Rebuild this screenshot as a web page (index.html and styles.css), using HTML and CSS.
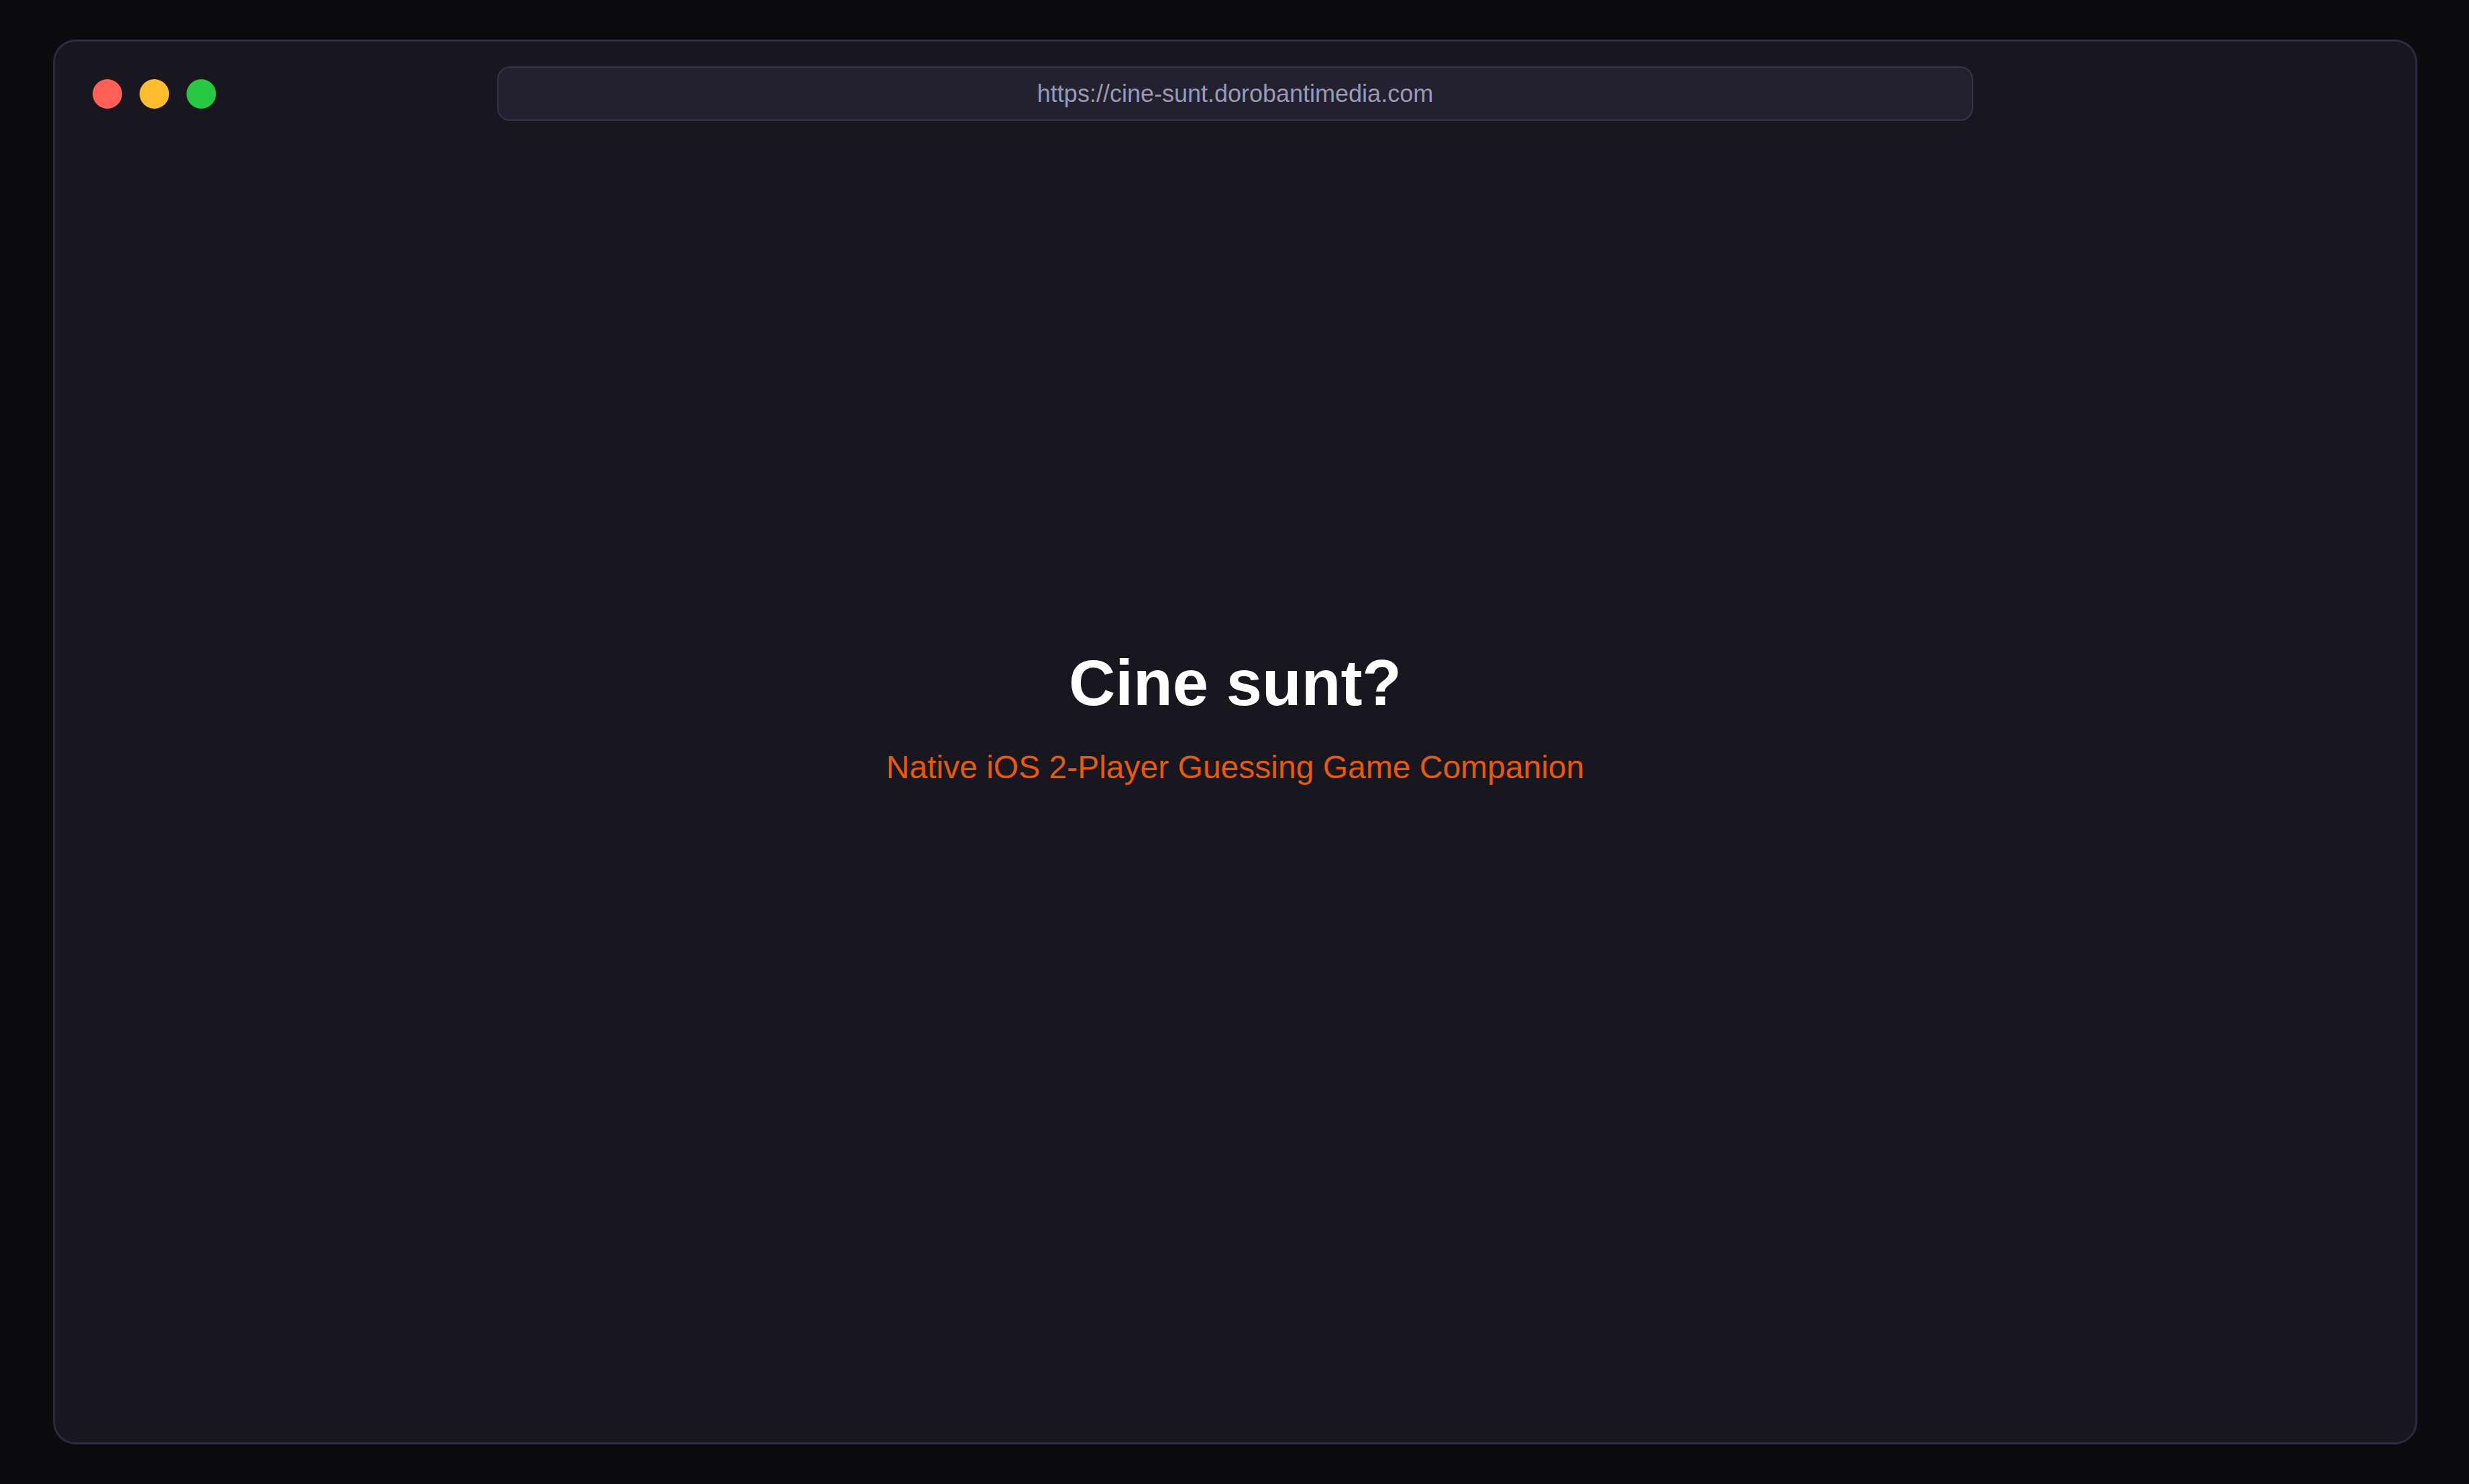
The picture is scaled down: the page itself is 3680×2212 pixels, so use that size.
FILE: index.html
```html
<!DOCTYPE html>
<html lang="en">
<head>
<meta charset="utf-8">
<title>Cine sunt?</title>
<link rel="stylesheet" href="styles.css">
</head>
<body>
  <div class="window">
    <div class="toolbar">
      <div class="dots">
        <span class="dot dot-red"></span>
        <span class="dot dot-yellow"></span>
        <span class="dot dot-green"></span>
      </div>
      <div class="urlbar">https://cine-sunt.dorobantimedia.com</div>
      <div class="spacer"></div>
    </div>
    <main class="content">
      <h1 class="title">Cine sunt?</h1>
      <p class="subtitle">Native iOS 2-Player Guessing Game Companion</p>
    </main>
  </div>
</body>
</html>
```

FILE: styles.css
```css
html, body {
  margin: 0;
  height: 100%;
}

body {
  box-sizing: border-box;
  background: #0b0c10;
  padding: 59px 77px 59px 79px;
  font-family: "Liberation Sans", Arial, Helvetica, sans-serif;
}

.window {
  box-sizing: border-box;
  height: 100%;
  background: #18171f;
  border: 3px solid #2e2b3f;
  border-radius: 34px;
  display: flex;
  flex-direction: column;
}

.toolbar {
  display: grid;
  grid-template-columns: 1fr 2200px 1fr;
  align-items: center;
  padding: 37px 56px 0 56px;
}

.dots {
  display: flex;
  gap: 26px;
}

.dot {
  width: 44px;
  height: 44px;
  border-radius: 50%;
  display: block;
}

.dot-red { background: #ff5f57; }
.dot-yellow { background: #febc2e; }
.dot-green { background: #28c840; }

.urlbar {
  box-sizing: border-box;
  height: 81px;
  background: #23212f;
  border: 2px solid #36334a;
  border-radius: 19px;
  color: #9d99b3;
  font-size: 36px;
  display: flex;
  align-items: center;
  justify-content: center;
}

.content {
  flex: 1;
  display: flex;
  flex-direction: column;
  align-items: center;
  padding-top: 780px;
}

.title {
  margin: 0;
  color: #ffffff;
  font-size: 96px;
  font-weight: 700;
  line-height: 1.2;
  letter-spacing: 0;
}

.subtitle {
  margin: 35px 0 0 0;
  color: #ea580c;
  font-size: 48px;
  line-height: 1.4;
}
```
